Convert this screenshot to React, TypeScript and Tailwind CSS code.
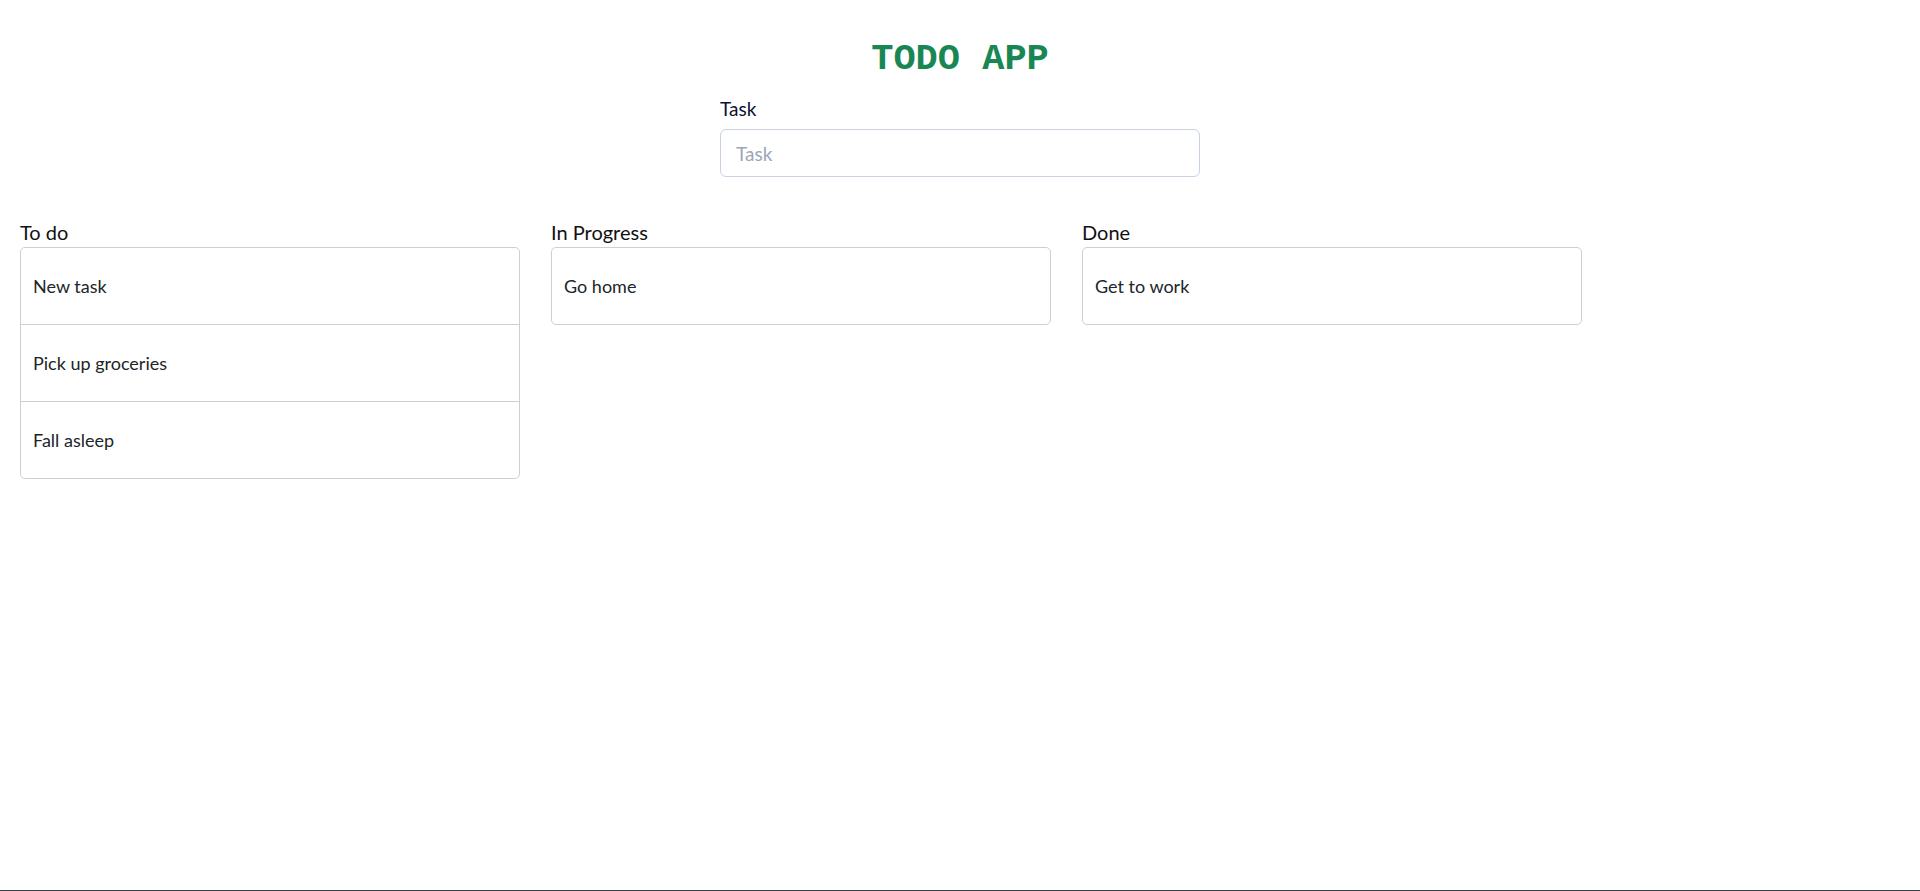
import React, { useState } from 'react';

interface Column {
  title: string;
  items: string[];
}

const columns: Column[] = [
  { title: 'To do', items: ['New task', 'Pick up groceries', 'Fall asleep'] },
  { title: 'In Progress', items: ['Go home'] },
  { title: 'Done', items: ['Get to work'] },
];

const TaskColumn: React.FC<{ column: Column }> = ({ column }) => (
  <div className="w-[500px]">
    <h2 className="text-[20px] leading-[24px] text-[#111111] mb-[3px]">{column.title}</h2>
    <ul className="border border-[#cfcfcf] rounded-[5px]">
      {column.items.map((item, i) => (
        <li
          key={item}
          className={`flex items-center pl-[12px] text-[18px] text-[#212529] ${
            i > 0 ? 'h-[77px] border-t border-[#cfcfcf]' : 'h-[76px]'
          }`}
        >
          {item}
        </li>
      ))}
    </ul>
  </div>
);

export default function App() {
  const [task, setTask] = useState('');

  return (
    <div className="min-h-[891px] flex flex-col bg-white font-['Lato','Noto_Sans',sans-serif]">
      <div className="flex-1">
        <h1 className="pt-[39px] text-center font-['Liberation_Mono','DejaVu_Sans_Mono',monospace] font-bold text-[37px] leading-[40px] text-[#198754]">
          TODO APP
        </h1>

        <div className="w-[480px] mx-auto mt-[18px]">
          <label htmlFor="task" className="block text-[19px] leading-[24px] text-[#0b1230] mb-[8px]">
            Task
          </label>
          <input
            id="task"
            value={task}
            onChange={(e) => setTask(e.target.value)}
            placeholder="Task"
            className="w-full h-[48px] px-[15px] text-[19px] border border-[#c9d3e1] rounded-[6px] outline-none placeholder:text-[#9ca6ba]"
          />
        </div>

        <div className="flex gap-[31px] pl-[20px] mt-[43px]">
          {columns.map((c) => (
            <TaskColumn key={c.title} column={c} />
          ))}
        </div>
      </div>
      <div className="h-px bg-[#3a4047]" />
    </div>
  );
}
